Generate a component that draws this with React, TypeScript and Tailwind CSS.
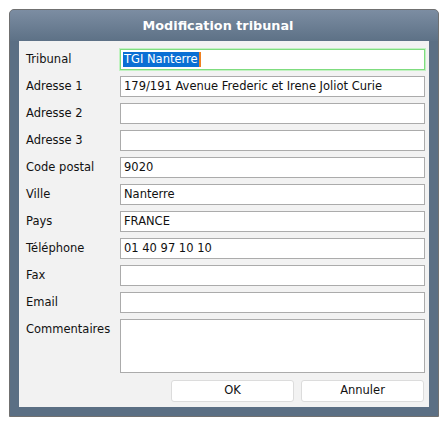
import React from "react";

const rows: { label: string; value?: string; focus?: boolean }[] = [
  { label: "Tribunal", value: "TGI Nanterre", focus: true },
  { label: "Adresse 1", value: "179/191 Avenue Frederic et Irene Joliot Curie" },
  { label: "Adresse 2" },
  { label: "Adresse 3" },
  { label: "Code postal", value: "9020" },
  { label: "Ville", value: "Nanterre" },
  { label: "Pays", value: "FRANCE" },
  { label: "Téléphone", value: "01 40 97 10 10" },
  { label: "Fax" },
  { label: "Email" },
];

export default function App() {
  return (
    <div className="w-[447px] h-[427px] bg-white pt-[9px] pl-[9px] text-[11.5px] text-[#111]" style={{ fontFamily: '"DejaVu Sans", Verdana, sans-serif' }}>
      <div className="w-[430px] h-[408px] border border-[#707070] rounded-t-[5px] bg-[#5b6f84] flex flex-col">
        <div className="h-[31px] shrink-0 rounded-t-[4px] bg-gradient-to-b from-[#7c8da2] to-[#5d7186] flex items-center justify-center">
          <span className="text-white font-bold text-[12.8px] pr-[12px]">Modification tribunal</span>
        </div>
        <div className="mx-[9px] bg-[#f2f2f2] pt-[8px] pb-[5px] pl-[7px] pr-[3px] flex flex-col gap-[6px]">
          {rows.map((r) => (
            <div key={r.label} className="flex h-[21px]">
              <div className="w-[94px] leading-[21px]">{r.label}</div>
              {r.focus ? (
                <div className="w-[305px] h-[21px] bg-white border border-[#7fdc7f] shadow-[0_0_0_1px_#c2f2c2] pl-[2px] leading-[19px] flex items-center">
                  <span className="bg-[#0a6fd4] text-white px-[1px] leading-[15px]">{r.value}</span>
                  <span className="w-[2px] h-[15px] bg-[#f08020]"></span>
                </div>
              ) : (
                <div className="w-[305px] h-[21px] bg-white border border-[#ababab] pl-[3px] leading-[19px] whitespace-nowrap overflow-hidden">
                  {r.value}
                </div>
              )}
            </div>
          ))}
          <div className="flex">
            <div className="w-[94px] leading-[21px]">Commentaires</div>
            <div className="w-[305px] h-[54px] bg-white border border-[#ababab]"></div>
          </div>
          <div className="flex justify-end gap-[7px] pr-[2px] mt-[1px]">
            <button className="w-[123px] h-[22px] bg-white border border-[#dcdcdc] rounded-[3px] text-[11.5px] text-[#111]">OK</button>
            <button className="w-[123px] h-[22px] bg-white border border-[#dcdcdc] rounded-[3px] text-[11.5px] text-[#111]">Annuler</button>
          </div>
        </div>
      </div>
    </div>
  );
}
